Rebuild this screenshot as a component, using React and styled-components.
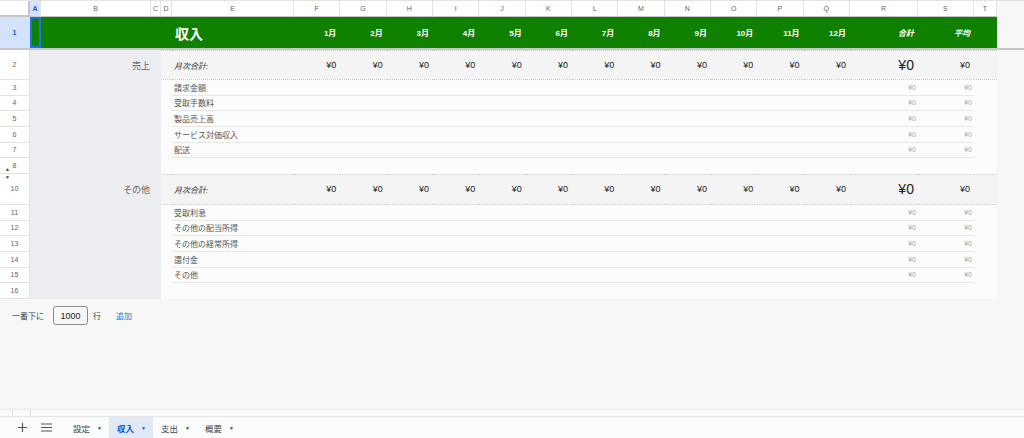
import React from "react";
import styled, { createGlobalStyle, css } from "styled-components";

const COLS = [30, 11, 110, 10, 11, 122, ...Array(12).fill(46.33), 68, 56, 23];
const TEMPLATE = COLS.map((w) => w + "px").join(" ");
const LETTERS = ["A", "B", "C", "D", "E", "F", "G", "H", "I", "J", "K", "L", "M", "N", "O", "P", "Q", "R", "S", "T"];
const MONTHS = Array.from({ length: 12 }, (_, i) => i + 1 + "月");

const GREEN = "#0f8000";
const LABEL_BG = "#ecedf0";
const DATA_BG = "#fbfcfb";
const SECTION_BG = "#f3f4f3";
const GRID_LINE = "#e1e3e1";

const sections = [
  { row: 2, name: "売上", items: [[3, "請求金額"], [4, "受取手数料"], [5, "製品売上高"], [6, "サービス対価収入"], [7, "配送"]], spacer: 8, hiddenBelow: true },
  { row: 10, name: "その他", items: [[11, "受取利息"], [12, "その他の配当所得"], [13, "その他の経常所得"], [14, "還付金"], [15, "その他"]], spacer: 16, hiddenAbove: true },
];

const GlobalStyle = createGlobalStyle`
  html, body {
    margin: 0;
    background: #f6f7f6;
    font-family: "Liberation Sans", "Noto Sans CJK JP", Arial, sans-serif;
  }
  * { box-sizing: border-box; }
`;

const Page = styled.div`
  width: 1024px;
  height: 438px;
  display: flex;
  flex-direction: column;
  overflow: hidden;
  border-top: 1px solid #e3e3e3;
`;

const Sheet = styled.div`
  display: flex;
  flex-direction: column;
  width: 997px;
`;

const GridRow = styled.div`
  display: grid;
  grid-template-columns: ${TEMPLATE};
  height: ${(p) => p.$h}px;
  background: ${(p) => p.$bg || "transparent"};
`;

const Corner = styled.div`
  background: #fff;
  border-right: 2px solid #c4c7c5;
  border-bottom: 2px solid #c4c7c5;
`;

const ColHead = styled.div`
  display: flex;
  align-items: center;
  justify-content: center;
  font-size: 7px;
  color: #5f6368;
  background: #fff;
  border-right: 1px solid ${GRID_LINE};
  border-bottom: 1px solid #c4c7c5;
  ${(p) =>
    p.$active &&
    css`
      background: #d3e3fd;
      color: #0b57d0;
      font-weight: bold;
    `}
`;

const RowHead = styled.div`
  position: relative;
  display: flex;
  align-items: center;
  justify-content: center;
  font-size: 7px;
  color: #5f6368;
  background: #fff;
  border-right: 1px solid ${GRID_LINE};
  border-bottom: 1px solid ${GRID_LINE};
  ${(p) =>
    p.$active &&
    css`
      background: #d3e3fd;
      color: #0b57d0;
      font-weight: bold;
    `}
`;

const HiddenArrow = styled.span`
  position: absolute;
  left: 5px;
  ${(p) => (p.$up ? "bottom: 1px;" : "top: 1px;")}
  font-size: 5px;
  line-height: 5px;
  color: #444;
`;

const Selected = styled.div`
  border: 2px solid #1a73e8;
`;

const TitleText = styled.div`
  display: flex;
  align-items: center;
  padding-left: 3px;
  color: #fff;
  font-weight: bold;
  font-size: 14px;
`;

const BandHead = styled.div`
  display: flex;
  align-items: center;
  justify-content: flex-end;
  padding-right: 4px;
  color: #fff;
  font-weight: bold;
  font-size: 8px;
  font-style: ${(p) => (p.$italic ? "italic" : "normal")};
`;

const FrozenBar = styled.div`
  height: 2px;
  background: #c4c7c5;
  width: 1024px;
`;

const LabelFill = styled.div`
  grid-column: span 3;
  background: ${LABEL_BG};
  display: flex;
  align-items: center;
  justify-content: flex-end;
  padding-right: 11px;
  font-size: 9px;
  color: #666;
`;

const SectionCell = styled.div`
  display: flex;
  align-items: center;
  justify-content: flex-end;
  padding-right: 4px;
  background: ${SECTION_BG};
  border-top: 1px dotted #d0d0d0;
  border-bottom: 1px dotted #d0d0d0;
  font-size: ${(p) => (p.$big ? 14 : 9)}px;
  color: #222;
`;

const SectionTitle = styled(SectionCell)`
  justify-content: flex-start;
  padding-left: 2px;
  font-size: 8px;
  font-style: italic;
  color: #333;
`;

const DataFill = styled.div`
  grid-column: ${(p) => p.$span || "span 1"};
  background: ${DATA_BG};
`;

const ItemCell = styled.div`
  display: flex;
  align-items: center;
  justify-content: ${(p) => (p.$left ? "flex-start" : "flex-end")};
  padding: ${(p) => (p.$left ? "0 0 0 2px" : "0 2px 0 0")};
  background: ${DATA_BG};
  border-bottom: 1px solid #e6e8e6;
  font-size: ${(p) => (p.$left ? 8 : 7)}px;
  color: ${(p) => (p.$left ? "#555" : "#aaa")};
  white-space: nowrap;
`;

const AddRowsBar = styled.div`
  display: flex;
  align-items: center;
  height: 20px;
  margin-top: 7px;
  padding-left: 12px;
  font-size: 8px;
  color: #444;
`;

const RowsInput = styled.div`
  width: 35px;
  height: 19px;
  margin: 0 5px 0 9px;
  border: 1px solid #8a8d8f;
  border-radius: 3px;
  display: flex;
  align-items: center;
  justify-content: center;
  font-size: 9px;
  color: #222;
`;

const AddLink = styled.span`
  margin-left: 15px;
  color: #1a73e8;
`;

const Spacer = styled.div`
  flex: 1;
`;

const ScrollStrip = styled.div`
  height: 9px;
  display: flex;
  background: #f9fafa;
  border-top: 2px solid #eef0f2;
  border-bottom: 1px solid #e3e5e7;
`;

const StripCell = styled.div`
  width: ${(p) => p.$w}px;
  border-right: 1px solid #e1e3e1;
`;

const TabBar = styled.div`
  height: 21px;
  display: flex;
  align-items: stretch;
  background: #f9fbfd;
  padding-left: 10px;
`;

const IconButton = styled.div`
  width: 24px;
  display: flex;
  align-items: center;
  justify-content: center;
`;

const Tab = styled.div`
  display: flex;
  align-items: center;
  gap: 7px;
  width: 44px;
  padding-left: 8px;
  margin-left: ${(p) => p.$ml || 0}px;
  font-size: 8.5px;
  color: ${(p) => (p.$active ? "#0b57d0" : "#444")};
  font-weight: ${(p) => (p.$active ? "bold" : "normal")};
  background: ${(p) => (p.$active ? "#e1e9f7" : "transparent")};
`;

const Caret = styled.span`
  font-size: 5px;
`;

function MenuIcon() {
  return (
    <svg width="11" height="9" viewBox="0 0 11 9">
      <path d="M0 1h11M0 4.5h11M0 8h11" stroke="#555" strokeWidth="1.2" />
    </svg>
  );
}

function PlusIcon() {
  return (
    <svg width="9" height="9" viewBox="0 0 9 9">
      <path d="M4.5 0v9M0 4.5h9" stroke="#555" strokeWidth="1.2" />
    </svg>
  );
}

function Section({ section }) {
  return (
    <>
      <GridRow $h={section.row === 2 ? 30 : 31}>
        <RowHead>
          {section.hiddenAbove && <HiddenArrow>▼</HiddenArrow>}
          {section.row}
        </RowHead>
        <LabelFill>{section.name}</LabelFill>
        <SectionCell />
        <SectionTitle>月次合計:</SectionTitle>
        {MONTHS.map((m) => (
          <SectionCell key={m}>¥0</SectionCell>
        ))}
        <SectionCell $big>¥0</SectionCell>
        <SectionCell>¥0</SectionCell>
        <SectionCell />
      </GridRow>
      {section.items.map(([n, label]) => (
        <GridRow key={n} $h={15.67}>
          <RowHead>{n}</RowHead>
          <LabelFill />
          <DataFill />
          <ItemCell $left>{label}</ItemCell>
          {MONTHS.map((m) => (
            <ItemCell key={m} />
          ))}
          <ItemCell>¥0</ItemCell>
          <ItemCell>¥0</ItemCell>
          <DataFill />
        </GridRow>
      ))}
      <GridRow $h={15.67}>
        <RowHead>
          {section.hiddenBelow && <HiddenArrow $up>▲</HiddenArrow>}
          {section.spacer}
        </RowHead>
        <LabelFill />
        <DataFill $span="span 17" />
      </GridRow>
    </>
  );
}

export default function App() {
  return (
    <Page>
      <GlobalStyle />
      <Sheet>
        <GridRow $h={16}>
          <Corner />
          {LETTERS.map((l) => (
            <ColHead key={l} $active={l === "A"}>
              {l}
            </ColHead>
          ))}
        </GridRow>
        <GridRow $h={31} $bg={GREEN}>
          <RowHead $active>1</RowHead>
          <Selected />
          <div />
          <div />
          <div />
          <TitleText>収入</TitleText>
          {MONTHS.map((m) => (
            <BandHead key={m}>{m}</BandHead>
          ))}
          <BandHead $italic>合計</BandHead>
          <BandHead $italic>平均</BandHead>
          <div />
        </GridRow>
      </Sheet>
      <FrozenBar />
      <Sheet>
        {sections.map((s) => (
          <Section key={s.row} section={s} />
        ))}
      </Sheet>
      <AddRowsBar>
        一番下に
        <RowsInput>1000</RowsInput>行<AddLink>追加</AddLink>
      </AddRowsBar>
      <Spacer />
      <ScrollStrip>
        <StripCell $w={13} />
        <StripCell $w={18} />
      </ScrollStrip>
      <TabBar>
        <IconButton>
          <PlusIcon />
        </IconButton>
        <IconButton>
          <MenuIcon />
        </IconButton>
        <Tab $ml={7}>
          設定<Caret>▼</Caret>
        </Tab>
        <Tab $active>
          収入<Caret>▼</Caret>
        </Tab>
        <Tab>
          支出<Caret>▼</Caret>
        </Tab>
        <Tab>
          概要<Caret>▼</Caret>
        </Tab>
      </TabBar>
    </Page>
  );
}
